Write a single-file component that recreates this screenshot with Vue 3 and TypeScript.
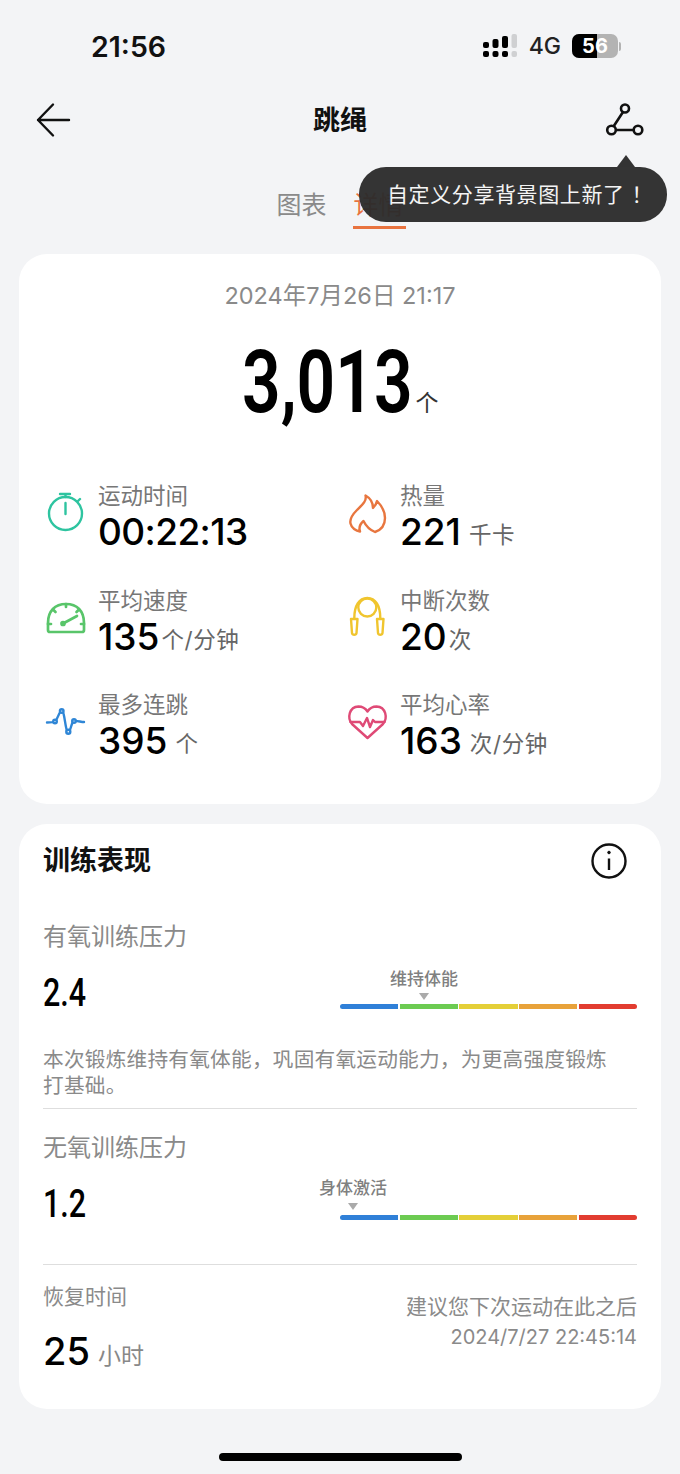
<script setup lang="ts">
interface Metric { label: string; value: string; unit: string; icon: string; tight?: boolean; clock?: boolean }
const metrics: Metric[] = [
  { label: '运动时间', value: '00:22:13', unit: '', icon: 'timer', clock: true },
  { label: '热量', value: '221', unit: '千卡', icon: 'flame' },
  { label: '平均速度', value: '135', unit: '个/分钟', icon: 'gauge', tight: true },
  { label: '中断次数', value: '20', unit: '次', icon: 'rope', tight: true },
  { label: '最多连跳', value: '395', unit: '个', icon: 'wave' },
  { label: '平均心率', value: '163', unit: '次/分钟', icon: 'heart' },
]
const colors = ['#2f80d8', '#6ccb52', '#e4cf38', '#e8a23a', '#e23c30']
</script>

<template>
  <div class="page">
    <div class="status">
      <span class="time">21:56</span>
      <div class="status-right">
        <svg class="signal" width="35" height="25" viewBox="0 0 35 25">
          <g fill="#000">
            <rect x="0" y="8" width="6" height="6" rx="2" />
            <rect x="0" y="17" width="6" height="6" rx="2" />
            <rect x="9.500" y="5" width="6" height="9" rx="2" />
            <rect x="9.500" y="17" width="6" height="6" rx="2" />
            <rect x="19" y="2" width="6" height="12" rx="2" />
            <rect x="19" y="17" width="6" height="6" rx="2" />
          </g>
          <g fill="#cfd0d2">
            <rect x="28.500" y="0" width="5.500" height="14" rx="2" />
            <rect x="28.500" y="17" width="5.500" height="6" rx="2" />
          </g>
        </svg>
        <span class="net">4G</span>
        <div class="battery">
          <div class="battery-body"><span class="battery-fill"></span><span class="battery-num">56</span></div>
          <span class="battery-cap"></span>
        </div>
      </div>
    </div>

    <header class="nav">
      <svg width="36" height="36" viewBox="0 0 36 36" fill="none" stroke="#111" stroke-width="2.400" stroke-linecap="round" stroke-linejoin="round">
        <path d="M18 2.500 3 18 18 33.500M3 18H34" />
      </svg>
      <h1>跳绳</h1>
      <svg width="40" height="36" viewBox="0 0 40 36" fill="none" stroke="#111" stroke-width="2.600">
        <circle cx="20" cy="6.500" r="4" />
        <circle cx="6.500" cy="28" r="4.300" />
        <circle cx="33" cy="28" r="4.300" />
        <path d="M18 10 8.500 24.500M11 28H28.500" />
      </svg>
    </header>

    <div class="tabs">
      <span class="tab">图表</span>
      <span class="tab active">详情</span>
      <div class="tip">
        <span class="tip-arrow"></span>
        自定义分享背景图上新了<span class="bang">！</span>
      </div>
    </div>

    <section class="card summary">
      <div class="date">2024年7月26日 21:17</div>
      <div class="total"><span class="total-num">3,013</span><span class="total-unit">个</span></div>
      <div class="grid">
        <div v-for="m in metrics" :key="m.label" class="metric">
          <svg class="icon" width="42" height="42" viewBox="0 0 42 42" fill="none" stroke-linecap="round" stroke-linejoin="round" stroke-width="2.400">
            <g v-if="m.icon === 'timer'" stroke="#2ec4a0">
              <circle cx="20.500" cy="20.500" r="16.500" />
              <path d="M15 1H25M20.500 1V4M20.500 10V21M33 8 35 6" />
            </g>
            <g v-else-if="m.icon === 'flame'" stroke="#e8763f" transform="translate(1 1)">
              <path d="M17.500 1.500C19 7 14 11 9 16 4 21 1.500 25 2.500 29.500 3.500 34 8 37 12 37.500 10.500 33 12 30 15.500 27 18 32 22 36 27 38 33 36 37 31 37 24 37 17 33 11 29 7 28.500 10 27 12 25 14 25 9 22 4 17.500 1.500Z" />
            </g>
            <g v-else-if="m.icon === 'gauge'" stroke="#59c56a" stroke-width="2.700">
              <path d="M3 25C3 13 10 6 21 6s18 7 18 19v7a2 2 0 0 1-2 2H5a2 2 0 0 1-2-2Z" />
              <path d="M21 6v3M8.500 12l2 2M33.500 12l-2 2M3 26h3M39 26h-3" />
              <path d="M19 25 32 18" />
              <circle cx="18" cy="25.500" r="1.500" fill="#59c56a" />
            </g>
            <g v-else-if="m.icon === 'rope'" stroke="#f0c52e" transform="translate(1 0)">
              <path d="M6.300 20C6.300 8 11 0 19.300 0S32.300 8 32.300 20" />
              <circle cx="19.300" cy="9.500" r="9" />
              <path d="M3 21h6.500l-1 14a2.300 2.300 0 0 1-4.500 0ZM29 21h6.500l-1 14a2.300 2.300 0 0 1-4.500 0Z" />
            </g>
            <g v-else-if="m.icon === 'wave'" stroke="#2f86d6">
              <path d="M2 20.500C5 20.500 8 20.500 10 19.500 13 17 14 9 16.700 9 20 9 20 29.700 23.300 29.700 26 29.700 26 20 29 19 32 18.500 36 20 39 20" />
              <circle cx="10" cy="19.500" r="1.800" fill="#fff" />
              <circle cx="16.700" cy="9" r="1.800" fill="#fff" />
              <circle cx="23.300" cy="29.700" r="2" fill="#fff" />
              <circle cx="29" cy="19" r="1.800" fill="#fff" />
            </g>
            <g v-else stroke="#df4a76" transform="translate(1 0)">
              <path d="M19.500 36 4 22C-1 16 1 5 10.500 4.500c4 0 7 2 9 5 2-3 5-5 9-5C38 5 40 16 35 22Z" />
              <path d="M2.500 20H12L15 24 19 16 22 25 25 18 27 20H36.500" />
            </g>
          </svg>
          <div class="metric-text">
            <div class="metric-label">{{ m.label }}</div>
            <div class="metric-value" :class="{ tight: m.tight, clock: m.clock }">
              <span class="num">{{ m.value }}</span><span v-if="m.unit" class="unit">{{ m.unit }}</span>
            </div>
          </div>
        </div>
      </div>
    </section>

    <section class="card perf">
      <div class="perf-head">
        <h2>训练表现</h2>
        <svg width="38" height="38" viewBox="0 0 38 38" fill="none" stroke="#111" stroke-width="2.400">
          <circle cx="19" cy="19" r="16.500" />
          <path d="M19 16.500V28" />
          <circle cx="19" cy="10.500" r="1.300" fill="#111" stroke-width="1" />
        </svg>
      </div>

      <div class="block first">
        <div class="block-title">有氧训练压力</div>
        <div class="score-row">
          <span class="score">2.4</span>
          <div class="scale">
            <div class="marker" :style="{ left: '84px' }">
              <span class="marker-text">维持体能</span><i></i>
            </div>
            <div class="bars"><span v-for="c in colors" :key="c" :style="{ background: c }"></span></div>
          </div>
        </div>
        <p class="desc">本次锻炼维持有氧体能，巩固有氧运动能力，为更高强度锻炼打基础。</p>
      </div>

      <div class="block second">
        <div class="block-title">无氧训练压力</div>
        <div class="score-row">
          <span class="score">1.2</span>
          <div class="scale">
            <div class="marker" :style="{ left: '13px' }">
              <span class="marker-text">身体激活</span><i></i>
            </div>
            <div class="bars"><span v-for="c in colors" :key="c" :style="{ background: c }"></span></div>
          </div>
        </div>
      </div>

      <div class="recover">
        <div>
          <div class="block-title small">恢复时间</div>
          <div class="hours"><span class="hours-num">25</span><span class="hours-unit">小时</span></div>
        </div>
        <div class="advice">
          <div>建议您下次运动在此之后</div>
          <div class="advice-date">2024/7/27 22:45:14</div>
        </div>
      </div>
    </section>

    <div class="home"></div>
  </div>
</template>

<style>
html, body { margin: 0; background: #f3f4f6; }
</style>

<style scoped>
.page {
  width: 680px;
  height: 1474px;
  overflow: hidden;
  background: #f3f4f6;
  box-sizing: border-box;
  font-family: Inter, "Noto Sans CJK SC", sans-serif;
  color: #111;
}
.status {
  height: 92px;
  box-sizing: border-box;
  padding: 0 59px 0 91px;
  display: flex;
  justify-content: space-between;
  align-items: center;
}
.time { font-size: 28.500px; font-weight: 600; }
.status-right { display: flex; align-items: center; gap: 11px; }
.net { font-size: 23px; font-weight: 500; color: #222; }
.battery { display: flex; align-items: center; gap: 1px; }
.battery-body {
  position: relative;
  width: 46px;
  height: 24px;
  border-radius: 7px;
  background: #b3b3b3;
  overflow: hidden;
  display: flex;
  align-items: center;
  justify-content: center;
}
.battery-fill { position: absolute; left: 0; top: 0; bottom: 0; width: 25px; background: #000; }
.battery-num { position: relative; color: #fff; font-size: 20px; font-weight: 700; line-height: 1; }
.battery-cap { width: 2px; height: 9px; background: #b3b3b3; border-radius: 0 2px 2px 0; }
.nav {
  height: 56px;
  padding: 0 35px;
  display: flex;
  align-items: center;
  justify-content: space-between;
}
.nav h1 { margin: 0 0 4px 4px; font-size: 27px; font-weight: 700; }
.tabs {
  position: relative;
  height: 106px;
  box-sizing: border-box;
  padding-top: 40px;
  display: flex;
  justify-content: center;
  gap: 27px;
  align-items: flex-start;
}
.tab {
  position: relative;
  width: 50px;
  font-size: 25px;
  line-height: 34px;
  color: #8a8a8a;
  height: 47px;
  text-align: center;
  white-space: nowrap;
}
.tab.active { color: #e8733f; }
.tab.active::after {
  content: "";
  position: absolute;
  left: -1px;
  right: -2px;
  top: 38px;
  height: 3px;
  background: #e8733f;
}
.tip {
  position: absolute;
  left: 359px;
  top: 19px;
  width: 308px;
  height: 55px;
  box-sizing: border-box;
  padding-left: 28px;
  border-radius: 27px;
  background: rgba(44, 44, 44, 0.96);
  color: #f4f4f4;
  font-size: 21px;
  letter-spacing: 0.600px;
  line-height: 55px;
  white-space: nowrap;
}
.bang { margin-left: 7px; }
.tip-arrow {
  position: absolute;
  left: 258px;
  top: -12px;
  border-left: 9px solid transparent;
  border-right: 9px solid transparent;
  border-bottom: 12px solid #333;
}
.card {
  margin: 0 19px;
  background: #fff;
  border-radius: 28px;
  box-sizing: border-box;
}
.summary { height: 550px; padding-top: 26px; }
.date { text-align: center; font-size: 23.500px; line-height: 32px; color: #8a8a8a; }
.total {
  height: 118px;
  margin-top: 11px;
  display: flex;
  justify-content: center;
  align-items: center;
}
.total-num {
  display: inline-block;
  width: 168px;
  white-space: nowrap;
  font-family: Roboto, sans-serif;
  font-size: 88px;
  font-weight: 600;
  line-height: 1;
  color: #000;
  transform: scaleX(0.77);
  transform-origin: left center;
}
.total-unit { font-size: 23px; color: #333; align-self: flex-end; margin: 0 0 23px 6px; }
.grid {
  margin-top: 40px;
  display: grid;
  grid-template-columns: 302px 1fr;
  grid-auto-rows: 104.500px;
  padding-left: 26px;
}
.metric { display: flex; gap: 11px; }
.icon { margin-top: 12px; flex: none; overflow: visible; }
.metric-text { display: flex; flex-direction: column; }
.metric-label { font-size: 22.500px; line-height: 30px; color: #777; }
.metric-value { display: flex; align-items: baseline; line-height: 42px; }
.num { font-size: 37px; font-weight: 500; color: #000; }
.clock .num { letter-spacing: -0.600px; }
.unit { font-size: 22.500px; color: #666; margin-left: 8px; letter-spacing: 0.600px; transform: translateY(-2px); }
.tight .unit { margin-left: 2px; }
.perf { height: 585px; margin-top: 20px; padding: 0 24px; }
.perf-head {
  height: 74px;
  display: flex;
  align-items: center;
  justify-content: space-between;
  padding-right: 9px;
}
.perf-head h2 { margin: 0 0 5px; font-size: 27px; font-weight: 700; color: #111; }
.block { box-sizing: border-box; }
.block.first { height: 211px; padding-top: 23px; border-bottom: 1px solid #dedede; }
.block.second { height: 156px; padding-top: 23px; border-bottom: 1px solid #dedede; }
.block-title { font-size: 24px; line-height: 32px; color: #8a8a8a; }
.block-title.small { font-size: 21px; line-height: 30px; }
.score-row { display: flex; justify-content: space-between; height: 62px; margin-top: 8px; }
.score {
  display: inline-block;
  width: 44px;
  white-space: nowrap;
  font-family: Roboto, sans-serif;
  font-size: 39px;
  font-weight: 500;
  line-height: 64px;
  color: #000;
  transform: scaleX(0.78);
  transform-origin: left center;
}
.scale { position: relative; width: 297px; padding-top: 38px; height: 62px; box-sizing: border-box; }
.marker { position: absolute; top: 6px; transform: translateX(-50%); display: flex; flex-direction: column; align-items: center; white-space: nowrap; }
.second .marker { top: 4px; }
.marker-text { font-size: 17px; line-height: 24px; font-weight: 500; color: #808080; }
.marker i {
  width: 0; height: 0;
  margin-top: 2px;
  border-left: 5px solid transparent;
  border-right: 5px solid transparent;
  border-top: 7px solid #aaa;
}
.second .marker i { margin-top: 3px; }
.bars { display: flex; gap: 1.500px; height: 5px; margin-top: 5px; border-radius: 3px; overflow: hidden; }
.bars span { flex: 1; }
.desc { margin: 24px 0 0; padding-right: 20px; font-size: 20.700px; line-height: 26px; color: #8a8a8a; letter-spacing: 0.200px; }
.recover { display: flex; justify-content: space-between; padding-top: 17px; }
.hours { display: flex; align-items: baseline; margin-top: 14px; }
.hours-num { font-size: 38px; font-weight: 500; color: #000; line-height: 50px; }
.hours-unit { font-size: 23px; color: #888; margin-left: 8px; transform: translateY(-1px); }
.advice { text-align: right; font-size: 21px; line-height: 31px; color: #8a8a8a; margin-top: 9px; }
.advice-date { font-size: 20px; }
.home { width: 243px; height: 8px; border-radius: 4px; background: #000; margin: 44px auto 0; }
</style>
